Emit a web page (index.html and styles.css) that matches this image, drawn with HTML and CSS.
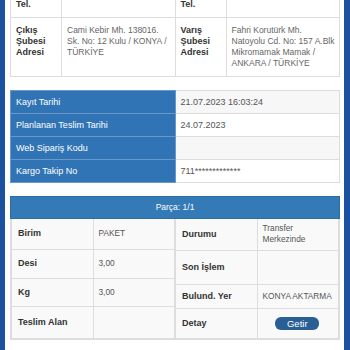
FILE: index.html
```html
<!DOCTYPE html>
<html lang="tr">
<head>
  <meta charset="UTF-8" />
  <meta name="viewport" content="width=device-width, initial-scale=1.0" />
  <title>Kargo Takip</title>
  <link rel="stylesheet" href="styles.css">
</head>
<body>
  <div class="frame">
    <table class="info">
      <colgroup>
        <col class="c-label"><col class="c-value"><col class="c-label"><col class="c-value">
      </colgroup>
      <tr>
        <th>Çıkış Şubesi Tel.</th>
        <td></td>
        <th>Varış Şubesi Tel.</th>
        <td></td>
      </tr>
      <tr>
        <th>Çıkış Şubesi Adresi</th>
        <td class="addr">Cami Kebir Mh. 138016.<br>Sk. No: 12 Kulu / KONYA /<br>TÜRKİYE</td>
        <th>Varış Şubesi Adresi</th>
        <td class="addr">Fahri Korutürk Mh.<br>Natoyolu Cd. No: 157 A.Blk<br>Mikromamak Mamak /<br>ANKARA / TÜRKİYE</td>
      </tr>
    </table>

    <table class="track">
      <tr><th>Kayıt Tarihi</th><td>21.07.2023 16:03:24</td></tr>
      <tr><th>Planlanan Teslim Tarihi</th><td>24.07.2023</td></tr>
      <tr><th>Web Sipariş Kodu</th><td></td></tr>
      <tr><th>Kargo Takip No</th><td>711*************</td></tr>
    </table>

    <div class="panel">
      <div class="panel-heading">Parça: 1/1</div>
      <div class="panel-body">
        <table class="parts parts-left">
          <tr><th>Birim</th><td>PAKET</td></tr>
          <tr><th>Desi</th><td>3,00</td></tr>
          <tr><th>Kg</th><td>3,00</td></tr>
          <tr><th>Teslim Alan</th><td></td></tr>
        </table>
        <table class="parts parts-right">
          <tr><th>Durumu</th><td>Transfer Merkezinde</td></tr>
          <tr><th>Son İşlem</th><td></td></tr>
          <tr><th>Bulund. Yer</th><td>KONYA AKTARMA</td></tr>
          <tr><th>Detay</th><td class="center"><button class="btn">Getir</button></td></tr>
        </table>
      </div>
    </div>
  </div>
</body>
</html>
```

FILE: styles.css
```css
body {
  margin: 0;
  font-family: "Liberation Sans", Arial, sans-serif;
  background-color: #fff;
  color: #333;
}

.frame {
  margin-top: -31px;
  min-height: 420px;
  padding: 0 4px 0 5px;
  border-left: 5px solid #1a52a0;
  border-right: 6px solid #1a52a0;
  box-sizing: border-box;
}

table {
  width: 100%;
  border-collapse: collapse;
  table-layout: fixed;
}

/* top address table */
.info .c-label {
  width: 51px;
}

.info th,
.info td {
  border: 1px solid #ddd;
  padding: 7px 5px 7px;
  line-height: 11px;
  vertical-align: top;
  text-align: left;
}

.info th {
  font-size: 9px;
  font-weight: bold;
  color: #333;
}

.info td {
  font-size: 8.5px;
  color: #666;
  padding-right: 2px;
}

.info td.addr {
  white-space: nowrap;
  overflow: hidden;
}

/* tracking summary */
.track {
  margin-top: 13px;
}

.track th,
.track td {
  height: 22px;
  padding: 0 5px;
  font-size: 9px;
  text-align: left;
  font-weight: normal;
}

.track th {
  background-color: #3174b5;
  color: #fff;
  border: 1px solid #6b98c9;
}

.track td {
  color: #555;
  border: 1px solid #ddd;
  background-color: #fff;
}

.track tr:nth-child(odd) td {
  background-color: #f7f7f7;
}

/* parts panel */
.panel {
  margin-top: 13px;
  border: 1px solid #ddd;
  border-top: none;
}

.panel-heading {
  height: 21px;
  line-height: 21px;
  text-align: center;
  font-size: 8.5px;
  color: #fff;
  background-color: #337ab7;
  border: 1px solid #2e6da4;
  margin: 0 -1px;
}

.panel-body {
  display: flex;
}

.parts th,
.parts td {
  border: 1px solid #ddd;
  background-color: #f9f9f9;
  padding: 0 6px;
  line-height: 11px;
  vertical-align: middle;
  text-align: left;
}

.parts th {
  font-size: 9px;
  font-weight: bold;
  color: #333;
}

.parts td {
  font-size: 8.3px;
  color: #555;
  padding-left: 5px;
}

.parts tr:first-child th,
.parts tr:first-child td {
  border-top: none;
}

.parts-left tr:nth-child(1) { height: 30px; }
.parts-left tr:nth-child(2) { height: 29px; }
.parts-left tr:nth-child(3) { height: 28px; }
.parts-left tr:nth-child(4) { height: 32px; }

.parts-right tr:nth-child(1) { height: 31px; }
.parts-right tr:nth-child(2) { height: 34px; }
.parts-right tr:nth-child(3) { height: 24px; }
.parts-right tr:nth-child(4) { height: 30px; }

.parts td.center {
  text-align: center;
}

.btn {
  width: 44px;
  height: 13px;
  padding: 0;
  border: none;
  border-radius: 6px;
  background-color: #2a5f96;
  color: #fff;
  font-family: "Liberation Sans", Arial, sans-serif;
  font-size: 9.5px;
  line-height: 13px;
}
```
